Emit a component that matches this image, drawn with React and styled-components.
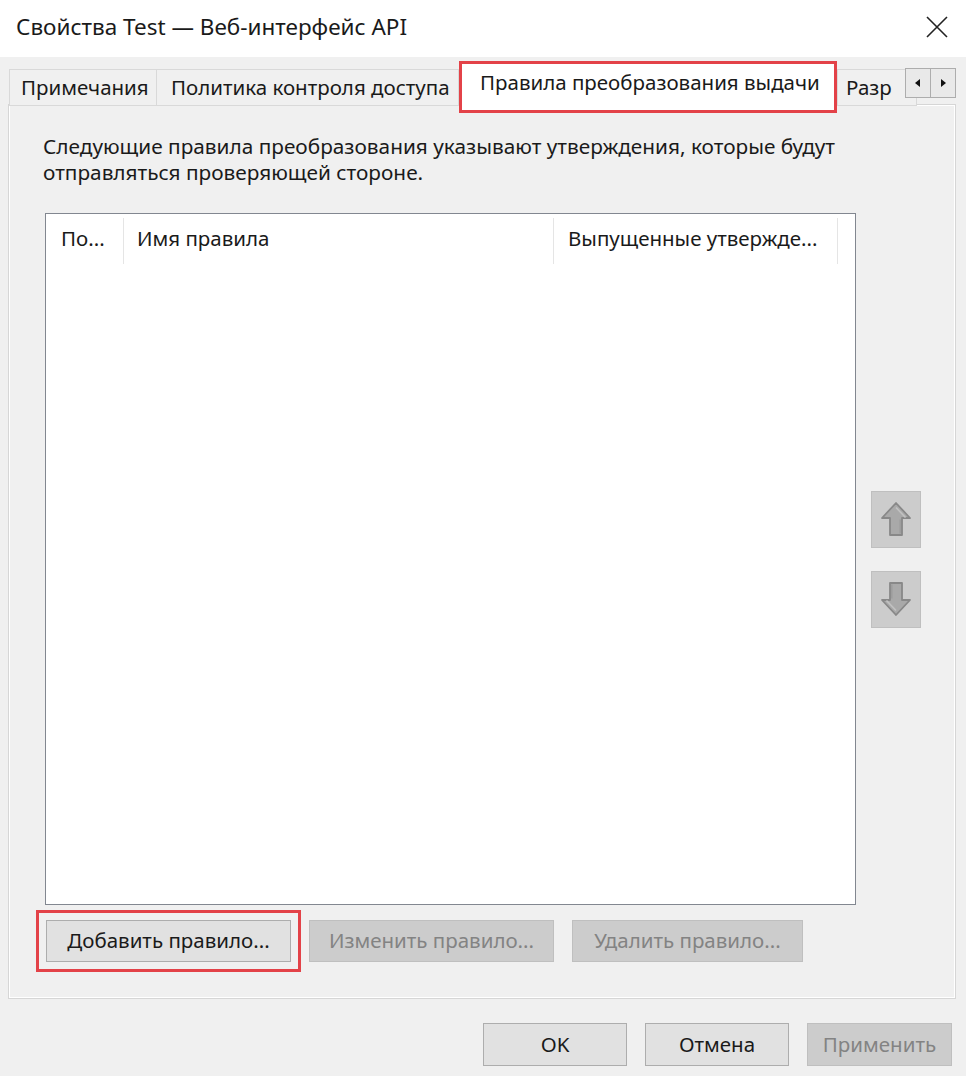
import React from 'react';
import styled, { createGlobalStyle } from 'styled-components';

const GlobalStyle = createGlobalStyle`
    html, body {
        margin: 0;
        padding: 0;
        background: #f0f0f0;
    }
    body {
        font-family: "Noto Sans", "Liberation Sans", sans-serif;
        color: #1a1a1a;
    }
`;

const Dialog = styled.div`
    width: 966px;
    height: 1076px;
    background: #f0f0f0;
    display: flex;
    flex-direction: column;
    overflow: hidden;
`;

const TitleBar = styled.div`
    height: 57px;
    flex: none;
    background: #ffffff;
    display: flex;
    align-items: center;
    justify-content: space-between;
    padding: 0 18px 4px 16px;
    box-sizing: border-box;
`;

const Title = styled.div`
    font-size: 22.5px;
    color: #1a1a1a;
`;

const CloseBtn = styled.svg`
    width: 22px;
    height: 22px;
`;

const Body = styled.div`
    padding: 5px 10px 0 8px;
    display: flex;
    flex-direction: column;
`;

const TabStrip = styled.div`
    display: flex;
    align-items: flex-end;
    height: 44px;
    padding-left: 2px;
    position: relative;
    z-index: 1;
`;

const Tab = styled.div`
    width: ${p => p.$width}px;
    height: ${p => (p.$active ? '50px' : '37px')};
    box-sizing: border-box;
    padding: 0 0 ${p => (p.$active ? '12px' : '1px')} ${p => p.$pad}px;
    display: flex;
    align-items: center;
    font-size: 20.5px;
    white-space: nowrap;
    overflow: hidden;
    flex: none;
    background: ${p => (p.$active ? '#ffffff' : '#f0f0f0')};
    border: 1px solid #d9d9d9;
    border-bottom: ${p => (p.$active ? 'none' : '1px solid #d9d9d9')};
    margin-left: ${p => (p.$active ? '1px' : '-1px')};
    margin-right: ${p => (p.$active ? '2px' : '0')};
    margin-bottom: ${p => (p.$active ? '-6px' : '0')};
    outline: ${p => (p.$active ? '3px solid #e34248' : 'none')};
    outline-offset: -2px;
`;

const ScrollArrows = styled.div`
    position: absolute;
    right: 0;
    top: 6px;
    display: flex;
    background: #f0f0f0;
`;

const ScrollArrow = styled.div`
    width: 26px;
    height: 30px;
    box-sizing: border-box;
    border: 1px solid #adadad;
    background: #e9e9e9;
    display: flex;
    align-items: center;
    justify-content: center;
    margin-left: -1px;
`;

const Panel = styled.div`
    height: 895px;
    margin-top: -2px;
    box-sizing: border-box;
    border: 1px solid #d6d6d6;
    box-shadow: inset 1px 1px 0 #ffffff, inset -1px -1px 0 #ffffff;
    background: #f0f0f0;
    padding: 28px 0 0 34px;
    display: flex;
    flex-direction: column;
`;

const Description = styled.p`
    margin: 0;
    font-size: 20.8px;
    line-height: 26px;
    width: 850px;
`;

const ListRow = styled.div`
    display: flex;
    align-items: center;
    margin-top: 28px;
`;

const ListBox = styled.div`
    width: 811px;
    height: 692px;
    margin-left: 2px;
    box-sizing: border-box;
    border: 1px solid #828790;
    background: #ffffff;
`;

const Header = styled.div`
    display: flex;
    height: 52px;
    align-items: stretch;
`;

const HeaderCell = styled.div`
    width: ${p => p.$width}px;
    box-sizing: border-box;
    padding: 0 0 5px ${p => p.$pad}px;
    display: flex;
    align-items: center;
    font-size: 20.5px;
    white-space: nowrap;
    position: relative;
    &::after {
        content: '';
        position: absolute;
        right: 0;
        top: 4px;
        bottom: 2px;
        width: 1px;
        background: #e5e5e5;
    }
`;

const MoveButtons = styled.div`
    display: flex;
    flex-direction: column;
    gap: 23px;
    margin-left: 15px;
    margin-top: 0;
`;

const MoveButton = styled.div`
    width: 50px;
    height: 57px;
    box-sizing: border-box;
    background: #cccccc;
    border: 1px solid #bfbfbf;
    display: flex;
    align-items: center;
    justify-content: center;
`;

const ActionRow = styled.div`
    display: flex;
    gap: 18px;
    margin-top: 15px;
    margin-left: 3px;
`;

const Button = styled.div`
    width: ${p => p.$width}px;
    height: ${p => p.$height || 42}px;
    box-sizing: border-box;
    padding-bottom: 2px;
    display: flex;
    align-items: center;
    justify-content: center;
    font-size: 20.5px;
    white-space: nowrap;
    background: ${p => (p.$disabled ? '#cccccc' : '#e1e1e1')};
    border: 1px solid ${p => (p.$disabled ? '#bfbfbf' : '#adadad')};
    color: ${p => (p.$disabled ? '#838383' : '#1a1a1a')};
    outline: ${p => (p.$marked ? '3px solid #e34248' : 'none')};
    outline-offset: 7px;
`;

const Footer = styled.div`
    display: flex;
    justify-content: flex-end;
    gap: 18px;
    margin-top: 24px;
    padding-right: 4px;
`;

const ArrowIcon = ({ down }) => (
    <svg width="34" height="38" viewBox="0 0 34 38">
        <g transform={down ? 'rotate(180 17 19)' : undefined}>
            <path
                d="M17 3 L31 18 L23 18 L23 35 L11 35 L11 18 L3 18 Z"
                fill="#a9a9a9"
                stroke="#888888"
                strokeWidth="1.8"
                strokeLinejoin="round"
            />
            <path d="M17 7.5 L26.5 17.5" stroke="#c2c2c2" strokeWidth="1.6" fill="none" />
            <path d="M21.2 19.5 L21.2 33.5" stroke="#9c9c9c" strokeWidth="1.4" fill="none" />
        </g>
    </svg>
);

const Triangle = ({ dir }) => (
    <svg width="8" height="10" viewBox="0 0 8 10">
        <path d={dir === 'left' ? 'M6 1 L1 5 L6 9 Z' : 'M2 1 L7 5 L2 9 Z'} fill="#111" />
    </svg>
);

const App = () => {
    return (
        <Dialog>
            <GlobalStyle />
            <TitleBar>
                <Title>Свойства Test — Веб-интерфейс API</Title>
                <CloseBtn viewBox="0 0 22 22">
                    <path d="M1 1 L21 21 M21 1 L1 21" stroke="#222" strokeWidth="1.6" />
                </CloseBtn>
            </TitleBar>
            <Body>
                <TabStrip>
                    <Tab $width={148} $pad={11}>Примечания</Tab>
                    <Tab $width={303} $pad={14}>Политика контроля доступа</Tab>
                    <Tab $width={376} $pad={19} $active>Правила преобразования выдачи</Tab>
                    <Tab $width={80} $pad={8}>Разр</Tab>
                    <ScrollArrows>
                        <ScrollArrow><Triangle dir="left" /></ScrollArrow>
                        <ScrollArrow><Triangle dir="right" /></ScrollArrow>
                    </ScrollArrows>
                </TabStrip>
                <Panel>
                    <Description>
                        Следующие правила преобразования указывают утверждения, которые будут отправляться проверяющей стороне.
                    </Description>
                    <ListRow>
                        <ListBox>
                            <Header>
                                <HeaderCell $width={78} $pad={15}>По...</HeaderCell>
                                <HeaderCell $width={430} $pad={13}>Имя правила</HeaderCell>
                                <HeaderCell $width={284} $pad={14}>Выпущенные утвержде...</HeaderCell>
                            </Header>
                        </ListBox>
                        <MoveButtons>
                            <MoveButton><ArrowIcon /></MoveButton>
                            <MoveButton><ArrowIcon down /></MoveButton>
                        </MoveButtons>
                    </ListRow>
                    <ActionRow>
                        <Button $width={245} $marked>Добавить правило...</Button>
                        <Button $width={245} $disabled>Изменить правило...</Button>
                        <Button $width={231} $disabled>Удалить правило...</Button>
                    </ActionRow>
                </Panel>
                <Footer>
                    <Button $width={144} $height={43}>OK</Button>
                    <Button $width={144} $height={43}>Отмена</Button>
                    <Button $width={145} $height={43} $disabled>Применить</Button>
                </Footer>
            </Body>
        </Dialog>
    );
};

export default App;
